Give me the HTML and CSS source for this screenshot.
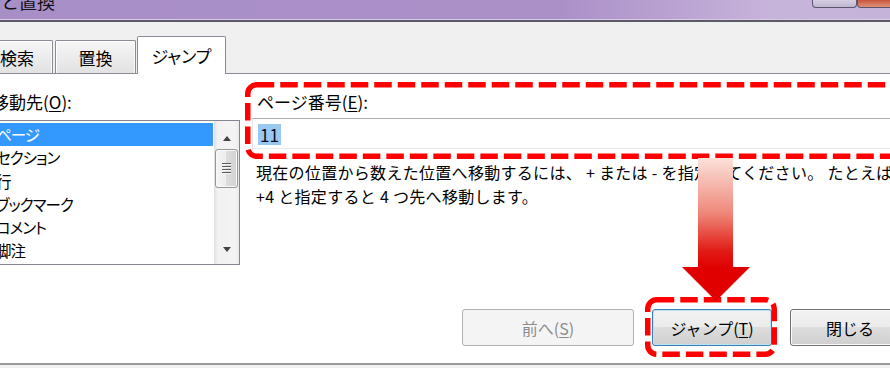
FILE: index.html
```html
<!DOCTYPE html>
<html lang="ja">
<head>
<meta charset="utf-8">
<title>検索と置換</title>
<link rel="stylesheet" href="styles.css">
</head>
<body>
<div class="stage">
  <div class="window">
    <div class="titlebar">
      <span class="title">検索と置換</span>
      <div class="caption-buttons">
        <span class="cap cap-help"></span>
        <span class="cap cap-close"></span>
      </div>
    </div>
    <div class="tabs">
      <div class="tab tab-find">検索</div>
      <div class="tab tab-replace">置換</div>
      <div class="tab tab-jump active">ジャンプ</div>
    </div>
    <div class="panel">
      <div class="columns">
        <div class="col-left">
          <div class="label">移動先(<u>O</u>):</div>
          <div class="listbox">
            <ul class="items">
              <li class="selected">ページ</li>
              <li>セクション</li>
              <li>行</li>
              <li>ブックマーク</li>
              <li>コメント</li>
              <li>脚注</li>
            </ul>
            <div class="scrollbar">
              <div class="sb-arrow up"></div>
              <div class="sb-track">
                <div class="sb-thumb"><span class="grip"></span></div>
              </div>
              <div class="sb-arrow down"></div>
            </div>
          </div>
        </div>
        <div class="col-right">
          <div class="label">ページ番号(<u>E</u>):</div>
          <div class="textbox"><span class="sel">11</span></div>
          <p class="hint">現在の位置から数えた位置へ移動するには、 + または - を指定してください。 たとえば<br>+4 と指定すると 4 つ先へ移動します。</p>
        </div>
      </div>
      <div class="footer">
        <button class="btn btn-prev" disabled>前へ(<u>S</u>)</button>
        <button class="btn btn-jump default">ジャンプ(<u>T</u>)</button>
        <button class="btn btn-close">閉じる</button>
      </div>
    </div>
  </div>

  <svg class="annot annot-box1" width="660" height="84" viewBox="0 0 660 84">
    <rect x="3.75" y="4.75" width="650" height="71.5" rx="9" ry="9" fill="none" stroke="#ff0000" stroke-width="5.5" stroke-dasharray="17.5 6"/>
  </svg>
  <svg class="annot annot-box2" width="140" height="68" viewBox="0 0 140 68">
    <rect x="5.75" y="5.75" width="126.5" height="54.5" rx="9" ry="9" fill="none" stroke="#ff0000" stroke-width="5.5" stroke-dasharray="17.5 6"/>
  </svg>
  <svg class="annot annot-arrow" width="76" height="150" viewBox="0 0 76 150">
    <defs>
      <linearGradient id="shaft" gradientUnits="userSpaceOnUse" x1="0" y1="3" x2="0" y2="113">
        <stop offset="0" stop-color="#fbe2db"/>
        <stop offset="0.5" stop-color="#ef8879"/>
        <stop offset="0.85" stop-color="#e11a15"/>
        <stop offset="1" stop-color="#e00000"/>
      </linearGradient>
    </defs>
    <rect x="20" y="3" width="35" height="110" fill="url(#shaft)"/>
    <polygon points="4,112 72,112 38,146" fill="#e00000"/>
  </svg>
</div>
</body>
</html>
```

FILE: styles.css
```css
* { box-sizing: border-box; }

body {
  margin: 0;
  background: #f0f0f0;
  overflow: hidden;
  font-family: "Noto Sans CJK JP", "Noto Sans", sans-serif;
  font-size: 16px;
  color: #000;
}

.stage {
  position: relative;
  width: 890px;
  height: 368px;
  overflow: hidden;
}

.window {
  width: 970px;
  height: 368px;
  margin-left: -40px;
  background: #f0f0f0;
}

/* title bar */
.titlebar {
  height: 22px;
  display: flex;
  padding-left: 5px;
  border-bottom: 2px solid #5c5968;
  background: linear-gradient(to right, #a88ec7 0%, #ab90c8 62%, #c7b4db 84%, #c4b3d8 100%);
  box-shadow: inset 0 -1px 0 #d6cbe3;
}

.title {
  font-size: 18px;
  line-height: 18px;
  margin-top: -8px;
  color: #111;
  white-space: nowrap;
}

.caption-buttons {
  margin-left: auto;
  margin-right: 26px;
  display: flex;
}

.cap {
  height: 8px;
  border: 1px solid #5a5670;
  border-top: none;
  border-radius: 0 0 4px 4px;
}

.cap-help {
  width: 45px;
  background: linear-gradient(#d6cfe2, #bfb6d0);
}

.cap-close {
  width: 47px;
  background: linear-gradient(#c9553d, #e09078);
}

/* tabs */
.tabs {
  display: flex;
  align-items: flex-end;
  padding-top: 14px;
  padding-left: 21px;
}

.tab {
  height: 33px;
  display: flex;
  align-items: center;
  justify-content: center;
  border: 1px solid #898c95;
  border-bottom: none;
  border-radius: 2px 2px 0 0;
  background: linear-gradient(#f6f6f6, #e2e2e2);
  box-shadow: inset 1px 1px 0 #fdfdfd, inset -1px 0 0 #fbfbfb;
  white-space: nowrap;
  font-size: 17px;
  font-feature-settings: "palt";
}

.tab-find { width: 72px; }
.tab-replace { width: 81px; margin-left: 2px; }
.tab-jump { width: 89px; margin-left: 1px; }

.tab.active {
  height: 38px;
  margin-bottom: -1px;
  background: #fff;
  box-shadow: none;
  position: relative;
  z-index: 1;
}

/* panel */
.panel {
  height: 292px;
  display: flex;
  flex-direction: column;
  padding: 18px 20px 17px 27px;
  background: #fff;
  border-top: 1px solid #898c95;
  border-left: 1px solid #898c95;
  border-bottom: 2px solid #9b9b9b;
}

.columns {
  display: flex;
  gap: 12px;
}

.col-left {
  width: 252px;
  flex: none;
}

.col-right {
  flex: 1;
  min-width: 0;
}

.label {
  font-size: 17px;
  line-height: 20px;
  white-space: nowrap;
}

.col-left .label {
  padding-left: 4px;
  margin-bottom: 8px;
}

.col-right .label {
  padding-left: 5px;
  margin-bottom: 6px;
}

u { text-decoration: underline; text-underline-offset: 2px; }

/* list box */
.listbox {
  display: flex;
  height: 145px;
  border: 1px solid #828790;
  background: #fff;
}

.items {
  list-style: none;
  margin: 0;
  padding: 2px 1px 0 0;
  flex: 1;
}

.items li {
  height: 23.3px;
  line-height: 23.3px;
  padding-left: 7px;
  white-space: nowrap;
  font-size: 15.5px;
  font-feature-settings: "palt";
  letter-spacing: -1px;
}

.items li.selected {
  background: #3399ff;
  color: #fff;
}

.scrollbar {
  width: 25px;
  flex: none;
  display: flex;
  flex-direction: column;
  background: linear-gradient(to right, #e0e0e0, #f2f2f2 15%, #f4f4f4 85%, #eaeaea);
}

.sb-arrow {
  height: 27px;
  display: flex;
  justify-content: center;
}

.sb-arrow.up {
  align-items: flex-end;
  padding-bottom: 7px;
}

.sb-arrow.down {
  align-items: flex-start;
  padding-top: 10px;
}

.sb-arrow::before {
  content: "";
  width: 0;
  height: 0;
  border-left: 4px solid transparent;
  border-right: 4px solid transparent;
}

.sb-arrow.up::before { border-bottom: 5px solid #444; }
.sb-arrow.down::before { border-top: 5px solid #444; }

.sb-track {
  flex: 1;
  padding: 1px 1px 0;
}

.sb-thumb {
  height: 39px;
  border: 1px solid #979797;
  border-radius: 3px;
  background: linear-gradient(to right, #f4f4f4, #ececec 50%, #dcdcdc 50%, #d2d2d2);
  box-shadow: inset 0 0 0 1px #f9f9f9;
  display: flex;
  align-items: center;
  justify-content: center;
}

.grip {
  width: 9px;
  height: 11px;
  background: repeating-linear-gradient(to bottom, #5a5a5a 0 1px, #f7f7f7 1px 2px, transparent 2px 3px);
}

/* text box */
.textbox {
  height: 31px;
  display: flex;
  align-items: center;
  padding: 2px 0 0 5px;
  border: 1px solid;
  border-color: #abadb3 #dbdfe6 #e3e9ef #e2e3ea;
  background: #fff;
}

.sel {
  background: #99c9f2;
  color: #0a0a1a;
  line-height: 21px;
  padding: 0 2px;
  font-size: 17px;
}

.hint {
  margin: 11px 0 0;
  padding-left: 4px;
  line-height: 24px;
  white-space: nowrap;
  letter-spacing: 0.3px;
}

/* buttons */
.footer {
  margin-top: auto;
  display: flex;
  justify-content: flex-end;
  gap: 18px;
}

.btn {
  width: 120px;
  height: 37px;
  padding: 0;
  font-family: inherit;
  font-size: 16px;
  color: #000;
  border: 1px solid #707070;
  border-radius: 3px;
  background: linear-gradient(#f2f2f2 0%, #ebebeb 50%, #dddddd 50%, #cfcfcf 100%);
  box-shadow: inset 0 0 0 1px #fbfbfb;
}

.btn-prev { width: 172px; }

.btn:disabled {
  color: #8c8c8c;
  border-color: #adb2b5;
  background: #f4f4f4;
  box-shadow: none;
}

.btn.default {
  border-color: #3c7fb1;
  box-shadow: inset 0 0 0 1px #b9e4f8;
}

/* annotations */
.annot {
  position: absolute;
  overflow: visible;
}

.annot-box1 { left: 244px; top: 80px; }
.annot-box2 { left: 642px; top: 294px; }
.annot-arrow { left: 678px; top: 155px; }
```
